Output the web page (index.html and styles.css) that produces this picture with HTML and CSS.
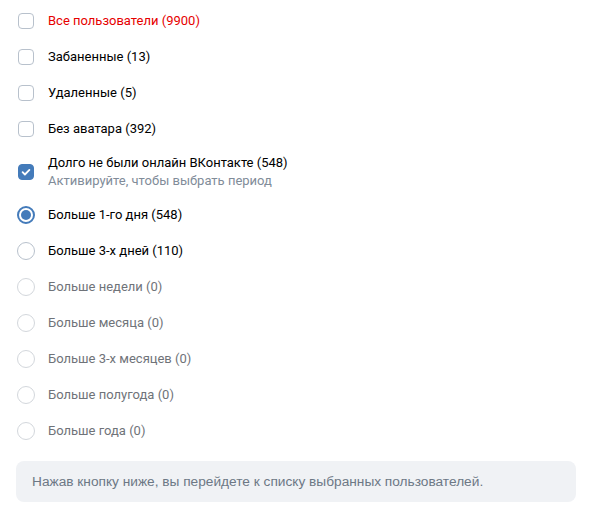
FILE: index.html
```html
<!DOCTYPE html>
<html lang="ru">
<head>
    <meta charset="UTF-8">
    <meta name="viewport" content="width=device-width, initial-scale=1.0">
    <title>Фильтр пользователей</title>
    <link rel="stylesheet" href="styles.css">
</head>
<body>

<div class="container">
    <div class="option-list">
        <label class="option">
            <span class="check"></span>
            <span class="label label-red">Все пользователи (9900)</span>
        </label>
        <label class="option">
            <span class="check"></span>
            <span class="label">Забаненные (13)</span>
        </label>
        <label class="option">
            <span class="check"></span>
            <span class="label">Удаленные (5)</span>
        </label>
        <label class="option">
            <span class="check"></span>
            <span class="label">Без аватара (392)</span>
        </label>
        <label class="option">
            <span class="check check-on">
                <svg width="12" height="12" viewBox="0 0 12 12"><path d="M2.6 6.2l2.3 2.3 4.5-4.6" fill="none" stroke="#fff" stroke-width="1.8" stroke-linecap="round" stroke-linejoin="round"/></svg>
            </span>
            <span class="label">
                Долго не были онлайн ВКонтакте (548)
                <span class="hint">Активируйте, чтобы выбрать период</span>
            </span>
        </label>

        <label class="option">
            <span class="radio radio-on"></span>
            <span class="label">Больше 1-го дня (548)</span>
        </label>
        <label class="option">
            <span class="radio"></span>
            <span class="label">Больше 3-х дней (110)</span>
        </label>
        <label class="option disabled">
            <span class="radio"></span>
            <span class="label">Больше недели (0)</span>
        </label>
        <label class="option disabled">
            <span class="radio"></span>
            <span class="label">Больше месяца (0)</span>
        </label>
        <label class="option disabled">
            <span class="radio"></span>
            <span class="label">Больше 3-х месяцев (0)</span>
        </label>
        <label class="option disabled">
            <span class="radio"></span>
            <span class="label">Больше полугода (0)</span>
        </label>
        <label class="option disabled">
            <span class="radio"></span>
            <span class="label">Больше года (0)</span>
        </label>
    </div>

    <div class="info-box">Нажав кнопку ниже, вы перейдете к списку выбранных пользователей.</div>
</div>

</body>
</html>
```

FILE: styles.css
```css
body {
    font-family: Roboto, "Liberation Sans", Arial, sans-serif;
    margin: 0;
    background: #fff;
    color: #000;
}
.container {
    padding: 3px 13px 0 16px;
}
.option-list {
    display: flex;
    flex-direction: column;
}
.option {
    display: flex;
    align-items: center;
    gap: 12px;
    min-height: 22px;
    padding: 7px 0;
    font-size: 13px;
    line-height: 18px;
    cursor: pointer;
}
.check,
.radio {
    flex: none;
    display: flex;
    justify-content: center;
    align-items: center;
}
.check {
    box-sizing: border-box;
    width: 16px;
    height: 16px;
    margin: 0 2px;
    border: 1.5px solid #b8c1cc;
    border-radius: 4px;
}
.check-on {
    background: #447bba;
    border-color: #447bba;
}
.radio {
    box-sizing: border-box;
    width: 18px;
    height: 18px;
    margin: 0 1px;
    border: 1.5px solid #b8c1cc;
    border-radius: 50%;
}
.radio-on {
    border: 2px solid #447bba;
}
.radio-on::after {
    content: "";
    width: 10px;
    height: 10px;
    border-radius: 50%;
    background: #447bba;
}
.label {
    display: flex;
    flex-direction: column;
}
.label-red {
    color: #e60000;
}
.hint {
    color: #818c99;
}
.disabled .label {
    color: #6f7379;
}
.disabled .radio {
    border-color: #d3d7dc;
}
.info-box {
    margin-top: 12px;
    padding: 12px 16px;
    background: #f0f2f5;
    border-radius: 8px;
    font-family: "Liberation Sans", Arial, sans-serif;
    font-size: 13.7px;
    line-height: 17px;
    color: #6d7885;
}
```
